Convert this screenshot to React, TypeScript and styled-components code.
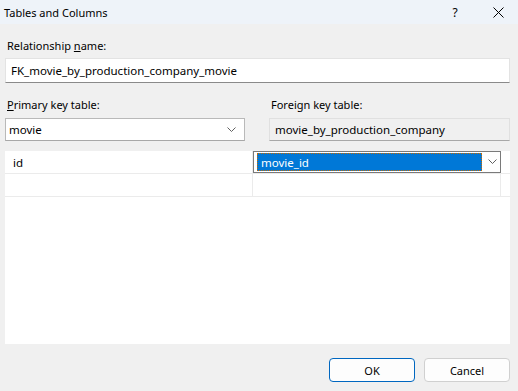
import React from 'react';
import styled, { createGlobalStyle } from 'styled-components';

const GlobalStyle = createGlobalStyle`
  html, body {
    margin: 0;
    padding: 0;
    background: #f0f0f0;
  }
  body {
    font-family: 'Noto Sans', 'Open Sans', sans-serif;
    font-size: 11px;
    color: #000;
  }
`;

const Dialog = styled.div`
  width: 518px;
  height: 391px;
  display: flex;
  flex-direction: column;
  background: #f0f0f0;
  overflow: hidden;
`;

const TitleBar = styled.div`
  height: 24px;
  display: flex;
  align-items: center;
  background: #eef3f9;
  padding-left: 4px;
`;

const Title = styled.div`
  flex: 1;
  font-size: 11px;
`;

const TitleButton = styled.div<{ $width: number }>`
  width: ${(p) => p.$width}px;
  height: 24px;
  display: flex;
  align-items: center;
  justify-content: center;
  font-size: 12px;
`;

const Body = styled.div`
  flex: 1;
  display: flex;
  flex-direction: column;
  padding: 0 8px 0 5px;
`;

const Label = styled.div<{ $top: number }>`
  height: 16px;
  line-height: 16px;
  margin-top: ${(p) => p.$top}px;
  padding-left: 2px;
`;

const TextBox = styled.div`
  height: 25px;
  margin-top: 4px;
  box-sizing: border-box;
  background: #fff;
  border: 1px solid #e3e3e3;
  border-bottom-color: #8a8a8a;
  display: flex;
  align-items: center;
  padding-left: 5px;
  font-size: 11.5px;
`;

const Row = styled.div`
  display: flex;
  gap: 24px;
`;

const Column = styled.div<{ $width: number }>`
  width: ${(p) => p.$width}px;
  display: flex;
  flex-direction: column;
`;

const Select = styled.div<{ $readonly?: boolean }>`
  height: 23px;
  margin-top: 5px;
  box-sizing: border-box;
  background: ${(p) => (p.$readonly ? '#f0f0f0' : '#fff')};
  border: 1px solid ${(p) => (p.$readonly ? '#e0e0e0' : '#b9b9b9')};
  border-bottom-color: #a8a8a8;
  display: flex;
  align-items: center;
  justify-content: space-between;
  padding: 0 8px 0 ${(p) => (p.$readonly ? 5 : 3)}px;
  font-size: 11.5px;
`;

const GridPanel = styled.div`
  margin-top: 10px;
  height: 193px;
  background: #fff;
  display: flex;
  flex-direction: column;
`;

const GridRow = styled.div`
  display: grid;
  grid-template-columns: 248px 248px;
  height: 23px;
  border-bottom: 1px solid #ebebeb;
  box-sizing: border-box;
`;

const Cell = styled.div`
  display: flex;
  align-items: center;
  padding-left: 8px;
  font-size: 11.5px;
  border-right: 1px solid #ebebeb;
  box-sizing: border-box;
`;

const EditCell = styled.div`
  display: flex;
  align-items: center;
  justify-content: space-between;
  border: 1px solid #7a7a7a;
  box-sizing: border-box;
  background: #fff;
  padding: 1px 3px 1px 3px;
`;

const Highlight = styled.div`
  width: 225px;
  height: 18px;
  box-sizing: border-box;
  background: #0078d7;
  color: #fff;
  outline: 1px dotted #c86a00;
  outline-offset: -1px;
  display: flex;
  align-items: center;
  padding-left: 4px;
  font-size: 11.5px;
`;

const ButtonBar = styled.div`
  display: flex;
  justify-content: flex-end;
  gap: 9px;
  margin-top: 14px;
`;

const Button = styled.button<{ $primary?: boolean }>`
  width: 86px;
  height: 24px;
  box-sizing: border-box;
  border-radius: 4px;
  background: #fdfdfd;
  border: 1px solid ${(p) => (p.$primary ? '#0067c0' : '#d0d0d0')};
  font-family: inherit;
  font-size: 11px;
  color: #000;
  padding: 0;
`;

const Chevron = () => (
  <svg width="9" height="6" viewBox="0 0 9 6">
    <polyline points="0.5,0.5 4.5,4.5 8.5,0.5" fill="none" stroke="#606060" strokeWidth="1" />
  </svg>
);

const CloseIcon = () => (
  <svg width="11" height="11" viewBox="0 0 11 11">
    <path d="M0.5 0.5 L10.5 10.5 M10.5 0.5 L0.5 10.5" stroke="#000" strokeWidth="1" />
  </svg>
);

const App = () => {
  return (
    <Dialog>
      <GlobalStyle />
      <TitleBar>
        <Title>Tables and Columns</Title>
        <TitleButton $width={46}>?</TitleButton>
        <TitleButton $width={40}>
          <CloseIcon />
        </TitleButton>
      </TitleBar>
      <Body>
        <Label $top={14}>
          Relationship <u>n</u>ame:
        </Label>
        <TextBox>FK_movie_by_production_company_movie</TextBox>
        <Row>
          <Column $width={240}>
            <Label $top={14}>
              <u>P</u>rimary key table:
            </Label>
            <Select>
              movie
              <Chevron />
            </Select>
          </Column>
          <Column $width={241}>
            <Label $top={14}>Foreign key table:</Label>
            <Select $readonly>movie_by_production_company</Select>
          </Column>
        </Row>
        <GridPanel>
          <GridRow>
            <Cell>id</Cell>
            <EditCell>
              <Highlight>movie_id</Highlight>
              <Chevron />
            </EditCell>
          </GridRow>
          <GridRow>
            <Cell />
            <Cell />
          </GridRow>
        </GridPanel>
        <ButtonBar>
          <Button $primary>OK</Button>
          <Button>Cancel</Button>
        </ButtonBar>
      </Body>
    </Dialog>
  );
};

export default App;
